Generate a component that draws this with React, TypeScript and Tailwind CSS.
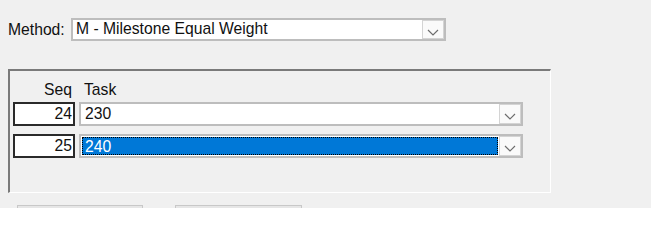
import React from "react"

const font = { fontFamily: '"Liberation Sans", Arial, sans-serif' }

function Chevron() {
  return (
    <svg width="12" height="7" viewBox="0 0 12 7" className="mt-[8px]">
      <path d="M1 1 L6 6 L11 1" fill="none" stroke="#6d6d6d" strokeWidth="1.2" />
    </svg>
  )
}

function DropButton() {
  return (
    <div className="flex w-[22px] h-full shrink-0 items-start justify-center border border-[#d4d4d4] bg-[#fafafa]">
      <Chevron />
    </div>
  )
}

function TaskRow({ seq, task, selected }: { seq: string; task: string; selected?: boolean }) {
  return (
    <div className="flex items-stretch gap-[4px] pl-[3px] h-[24px]">
      <div className="w-[62px] h-full border-2 border-[#2a2a2a] bg-white text-right pr-[1px] leading-[19px] text-[#111]">
        {seq}
      </div>
      <div className="flex w-[444px] h-full border-2 border-[#bdbdbd] bg-white">
        <div className="flex-1 p-[1px]">
          {selected ? (
            <div className="h-full border border-dotted border-black bg-[#0078d7] pl-[2px] leading-[17px] text-white">
              {task}
            </div>
          ) : (
            <div className="h-full pl-[3px] leading-[18px] text-[#111]">{task}</div>
          )}
        </div>
        <DropButton />
      </div>
    </div>
  )
}

export default function App() {
  return (
    <div className="w-[651px] h-[208px] overflow-hidden bg-[#f0f0f0] text-[15.7px]" style={font}>
      <div className="flex items-center ml-[8px] mt-[18px] h-[23px]">
        <span className="w-[63px] text-[#111]">Method:</span>
        <div className="flex w-[375px] h-full border-2 border-[#bdbdbd] bg-white">
          <div className="flex-1 pl-[3px] leading-[18px] text-[#111]">M - Milestone Equal Weight</div>
          <DropButton />
        </div>
      </div>

      <div className="ml-[8px] mt-[28px] w-[543px] h-[124px] border-t-2 border-l-2 border-r border-b border-t-[#7a7a7a] border-l-[#7a7a7a] border-r-white border-b-white">
        <div className="flex mt-[7px] h-[18px] pl-[3px] text-[#111]">
          <div className="w-[62px] text-right pr-[3px]">Seq</div>
          <div className="pl-[9px]">Task</div>
        </div>
        <div className="mt-[6px] flex flex-col gap-[8px]">
          <TaskRow seq="24" task="230" />
          <TaskRow seq="25" task="240" selected />
        </div>
      </div>

      <div className="flex gap-[32px] ml-[17px] mt-[12px]">
        <div className="w-[126px] h-[24px] border border-[#c8c8c8] bg-[#e6e6e6]" />
        <div className="w-[127px] h-[24px] border border-[#c8c8c8] bg-[#e6e6e6]" />
      </div>
    </div>
  )
}
